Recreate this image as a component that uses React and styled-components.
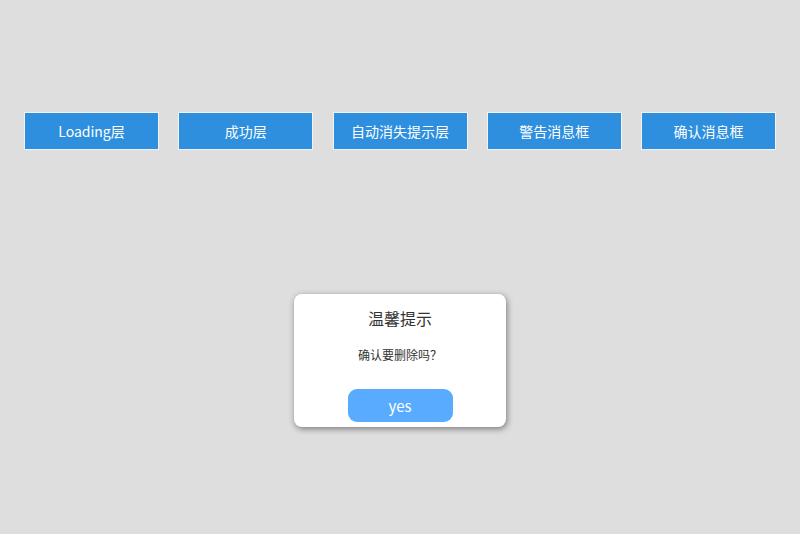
import React from "react";
import styled, { createGlobalStyle } from "styled-components";

const GlobalStyle = createGlobalStyle`
  html, body {
    margin: 0;
    padding: 0;
    background: #dedede;
    font-family: "Noto Sans CJK SC", "Noto Sans", sans-serif;
  }
`;

const Page = styled.div`
  width: 800px;
  height: 534px;
  background: #dedede;
  position: relative;
  overflow: hidden;
`;

const Toolbar = styled.div`
  display: flex;
  justify-content: space-between;
  padding: 112px 24px 0 24px;
`;

const Button = styled.button`
  width: 135px;
  height: 38px;
  background: #2d8fde;
  border: 1px solid #f2f2f2;
  color: #fff;
  font-family: inherit;
  font-size: 14px;
  padding: 0;
  cursor: pointer;
`;

const Dialog = styled.div`
  position: absolute;
  left: 294px;
  top: 294px;
  width: 212px;
  box-sizing: border-box;
  background: #fff;
  border-radius: 8px;
  box-shadow: 1px 2px 6px rgba(0, 0, 0, 0.45);
  padding: 12px 0 5px;
  display: flex;
  flex-direction: column;
  align-items: center;
`;

const Title = styled.div`
  font-size: 16px;
  line-height: 24px;
  color: #333;
`;

const Message = styled.div`
  margin-top: 14px;
  font-size: 12px;
  line-height: 22px;
  color: #333;
`;

const Confirm = styled.button`
  margin-top: 23px;
  width: 105px;
  height: 33px;
  border: none;
  border-radius: 9px;
  background: #59abff;
  color: #fff;
  font-family: inherit;
  font-size: 15px;
  padding: 0;
`;

const labels = ["Loading层", "成功层", "自动消失提示层", "警告消息框", "确认消息框"];

function App() {
  return (
    <Page>
      <GlobalStyle />
      <Toolbar>
        {labels.map((label) => (
          <Button key={label}>{label}</Button>
        ))}
      </Toolbar>
      <Dialog>
        <Title>温馨提示</Title>
        <Message>确认要删除吗？</Message>
        <Confirm>yes</Confirm>
      </Dialog>
    </Page>
  );
}

export default App;
